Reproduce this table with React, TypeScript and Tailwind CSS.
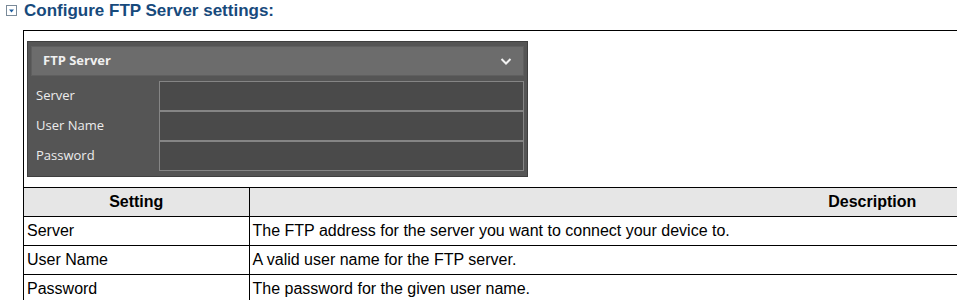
import React from 'react'

const rows = [
  { name: 'Server', desc: 'The FTP address for the server you want to connect your device to.' },
  { name: 'User Name', desc: 'A valid user name for the FTP server.' },
  { name: 'Password', desc: 'The password for the given user name.' },
]

function ToggleIcon() {
  return (
    <svg width="11" height="11" viewBox="0 0 11 11" className="shrink-0">
      <rect x="0.5" y="0.5" width="10" height="10" fill="#fff" stroke="#7a8a99" />
      <path d="M3 4.5 L8 4.5 L5.5 7.5 Z" fill="#1f5f9f" />
    </svg>
  )
}

function FtpPanel() {
  return (
    <div className="w-[501px] border border-[#3f3f3f] bg-[#555555] px-[3px] pb-[5px] pt-[4px] font-['Open_Sans','Noto_Sans',sans-serif]">
      <div className="flex h-[30px] items-center justify-between border border-[#5f5f5f] bg-[#6c6c6c] pl-[11px] pr-[11px]">
        <span className="text-[13px] font-bold text-[#f0f0f0]">FTP Server</span>
        <svg width="12" height="9" viewBox="0 0 12 9">
          <path d="M1.5 2 L6 6.5 L10.5 2" fill="none" stroke="#f2f2f2" strokeWidth="2" />
        </svg>
      </div>
      <div className="mt-[5px] flex flex-col">
        {rows.map((r) => (
          <div key={r.name} className="flex h-[30px] items-center">
            <span className="w-[128px] pl-[5px] text-[13px] text-[#ececec]">{r.name}</span>
            <div className="h-full flex-1 border border-[#858585] bg-[#4a4a4a]" />
          </div>
        ))}
      </div>
    </div>
  )
}

export default function App() {
  return (
    <div className="h-[300px] w-[957px] overflow-hidden bg-white font-['Liberation_Sans',Arial,sans-serif] text-black">
      {/* Heading */}
      <div className="flex h-[21px] items-center gap-[7px] pl-[6px]">
        <ToggleIcon />
        <h3 className="text-[17px] font-bold text-[#174a7c]">Configure FTP Server settings:</h3>
      </div>

      {/* Content box */}
      <div className="ml-[23px] mt-[9px] w-[1472px] border-l border-t border-black">
        <div className="pb-[10px] pl-[3px] pt-[10px]">
          <FtpPanel />
        </div>
        <table className="w-full border-collapse text-[16px]">
          <thead>
            <tr className="h-[29px] bg-[#e6e6e6]">
              <th className="w-[225px] border-y border-r border-black font-bold">Setting</th>
              <th className="border-y border-black font-bold">Description</th>
            </tr>
          </thead>
          <tbody>
            {rows.map((r) => (
              <tr key={r.name} className="h-[29px]">
                <td className="border-b border-r border-black pl-[3px]">{r.name}</td>
                <td className="border-b border-black pl-[3px]">{r.desc}</td>
              </tr>
            ))}
          </tbody>
        </table>
      </div>
    </div>
  )
}
